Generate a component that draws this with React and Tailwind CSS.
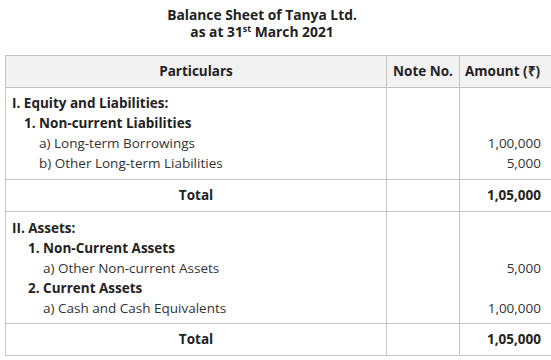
export default function App() {
  return (
    <div className="w-[551px] h-[360px] overflow-hidden bg-white text-[#222] text-[13.5px] leading-[20px] font-['Open_Sans',sans-serif]">
      <div className="w-[524px] pt-[6px] text-center font-bold text-[13.8px] leading-[17px]">
        <div>Balance Sheet of Tanya Ltd.</div>
        <div>
          as at 31<span className="relative -top-[5px] text-[9px] leading-[0px]">st</span> March 2021
        </div>
      </div>
      <table className="ml-[5px] mt-[15px] w-[547px] border-collapse table-fixed">
        <colgroup>
          <col className="w-[381px]" />
          <col className="w-[73px]" />
          <col className="w-[93px]" />
        </colgroup>
        <thead>
          <tr className="bg-[#f2f2f2] font-bold">
            <th className="border border-[#c3c3c3] pt-[5px] pb-[6px] text-center">Particulars</th>
            <th className="border border-[#c3c3c3] pt-[5px] pb-[6px] text-center whitespace-nowrap">Note No.</th>
            <th className="border border-[#c3c3c3] pt-[5px] pb-[6px] text-left pl-[5px] whitespace-nowrap">Amount (₹)</th>
          </tr>
        </thead>
        <tbody>
          <tr>
            <td className="border border-[#c3c3c3] pt-[5px] pb-[6px] pl-[6px] align-top">
              <div className="font-bold">I. Equity and Liabilities:</div>
              <div className="font-bold pl-[12px]">1. Non-current Liabilities</div>
              <div className="pl-[27px] text-[#333]">a) Long-term Borrowings</div>
              <div className="pl-[27px] text-[#333]">b) Other Long-term Liabilities</div>
            </td>
            <td className="border border-[#c3c3c3]"></td>
            <td className="border border-[#c3c3c3] pt-[5px] pb-[6px] pr-[11px] text-right align-top text-[#333]">
              <div>&nbsp;</div>
              <div>&nbsp;</div>
              <div>1,00,000</div>
              <div>5,000</div>
            </td>
          </tr>
          <tr>
            <td className="border border-[#c3c3c3] pt-[5px] pb-[6px] text-center font-bold">Total</td>
            <td className="border border-[#c3c3c3]"></td>
            <td className="border border-[#c3c3c3] pt-[5px] pb-[6px] pr-[11px] text-right font-bold">1,05,000</td>
          </tr>
          <tr>
            <td className="border border-[#c3c3c3] pt-[6px] pb-[5px] pl-[6px] align-top">
              <div className="font-bold">II. Assets:</div>
              <div className="font-bold pl-[16px]">1. Non-Current Assets</div>
              <div className="pl-[31px] text-[#333]">a) Other Non-current Assets</div>
              <div className="font-bold pl-[16px]">2. Current Assets</div>
              <div className="pl-[31px] text-[#333]">a) Cash and Cash Equivalents</div>
            </td>
            <td className="border border-[#c3c3c3]"></td>
            <td className="border border-[#c3c3c3] pt-[6px] pb-[5px] pr-[11px] text-right align-top text-[#333]">
              <div>&nbsp;</div>
              <div>&nbsp;</div>
              <div>5,000</div>
              <div>&nbsp;</div>
              <div>1,00,000</div>
            </td>
          </tr>
          <tr>
            <td className="border border-[#c3c3c3] pt-[5px] pb-[6px] text-center font-bold">Total</td>
            <td className="border border-[#c3c3c3]"></td>
            <td className="border border-[#c3c3c3] pt-[5px] pb-[6px] pr-[11px] text-right font-bold">1,05,000</td>
          </tr>
        </tbody>
      </table>
    </div>
  );
}
